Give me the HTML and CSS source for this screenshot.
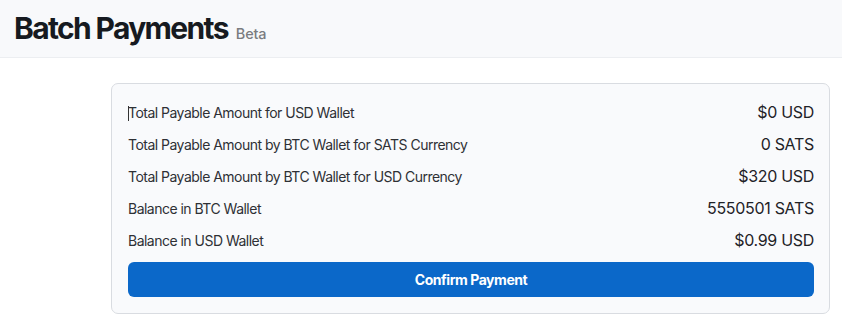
FILE: index.html
```html
<!DOCTYPE html>
<html>
<head>
<meta charset="utf-8">
<title>Batch Payments</title>
<link rel="stylesheet" href="styles.css">
</head>
<body>
<div class="head">
	<h1>Batch Payments</h1>
	<span class="tag">Beta</span>
</div>

<div class="wrap">
	<div class="card">
		<div class="row"><span class="lbl"><i class="caret"></i>Total Payable Amount for USD Wallet</span><span class="val">$0 USD</span></div>
		<div class="row"><span class="lbl">Total Payable Amount by BTC Wallet for SATS Currency</span><span class="val">0 SATS</span></div>
		<div class="row"><span class="lbl">Total Payable Amount by BTC Wallet for USD Currency</span><span class="val">$320 USD</span></div>
		<div class="row"><span class="lbl">Balance in BTC Wallet</span><span class="val">5550501 SATS</span></div>
		<div class="row"><span class="lbl">Balance in USD Wallet</span><span class="val">$0.99 USD</span></div>
		<button class="btn">Confirm Payment</button>
	</div>
</div>
</body>
</html>
```

FILE: styles.css
```css
body{
	margin:0;
	padding:0;
	background:#fff;
	font-family:Inter, "Liberation Sans", sans-serif;
	color:#222;
}
.head{
	display:flex;
	align-items:baseline;
	gap:8px;
	height:58px;
	padding:10px 14px 0;
	box-sizing:border-box;
	background:#f8f9fb;
	border-bottom:1px solid #eceef1;
}
.head h1{
	margin:0;
	font-size:30px;
	font-weight:700;
	letter-spacing:-1.65px;
	color:#161a20;
}
.tag{
	font-size:14.5px;
	font-weight:500;
	color:#7a7c80;
	letter-spacing:-0.2px;
}
.wrap{
	padding:25px 12px 0 111px;
}
.card{
	background:#f9fafc;
	border:1px solid #d9dce1;
	border-radius:7px;
	padding:12px 15px 16px 16px;
}
.row{
	display:flex;
	justify-content:space-between;
	align-items:center;
	height:32px;
}
.lbl{
	font-size:14px;
	color:#2e3035;
	letter-spacing:-0.52px;
}
.caret{
	display:inline-block;
	width:1px;
	height:15px;
	margin-right:-1px;
	vertical-align:-3px;
	background:#333;
}
.val{
	font-size:16px;
	color:#1f2227;
	letter-spacing:-0.3px;
}
.btn{
	display:block;
	width:100%;
	height:35px;
	margin-top:6px;
	border:0;
	border-radius:6px;
	background:#0b68c9;
	color:#fff;
	font-family:Inter, "Liberation Sans", sans-serif;
	font-size:14px;
	font-weight:700;
	letter-spacing:-0.45px;
}
```
